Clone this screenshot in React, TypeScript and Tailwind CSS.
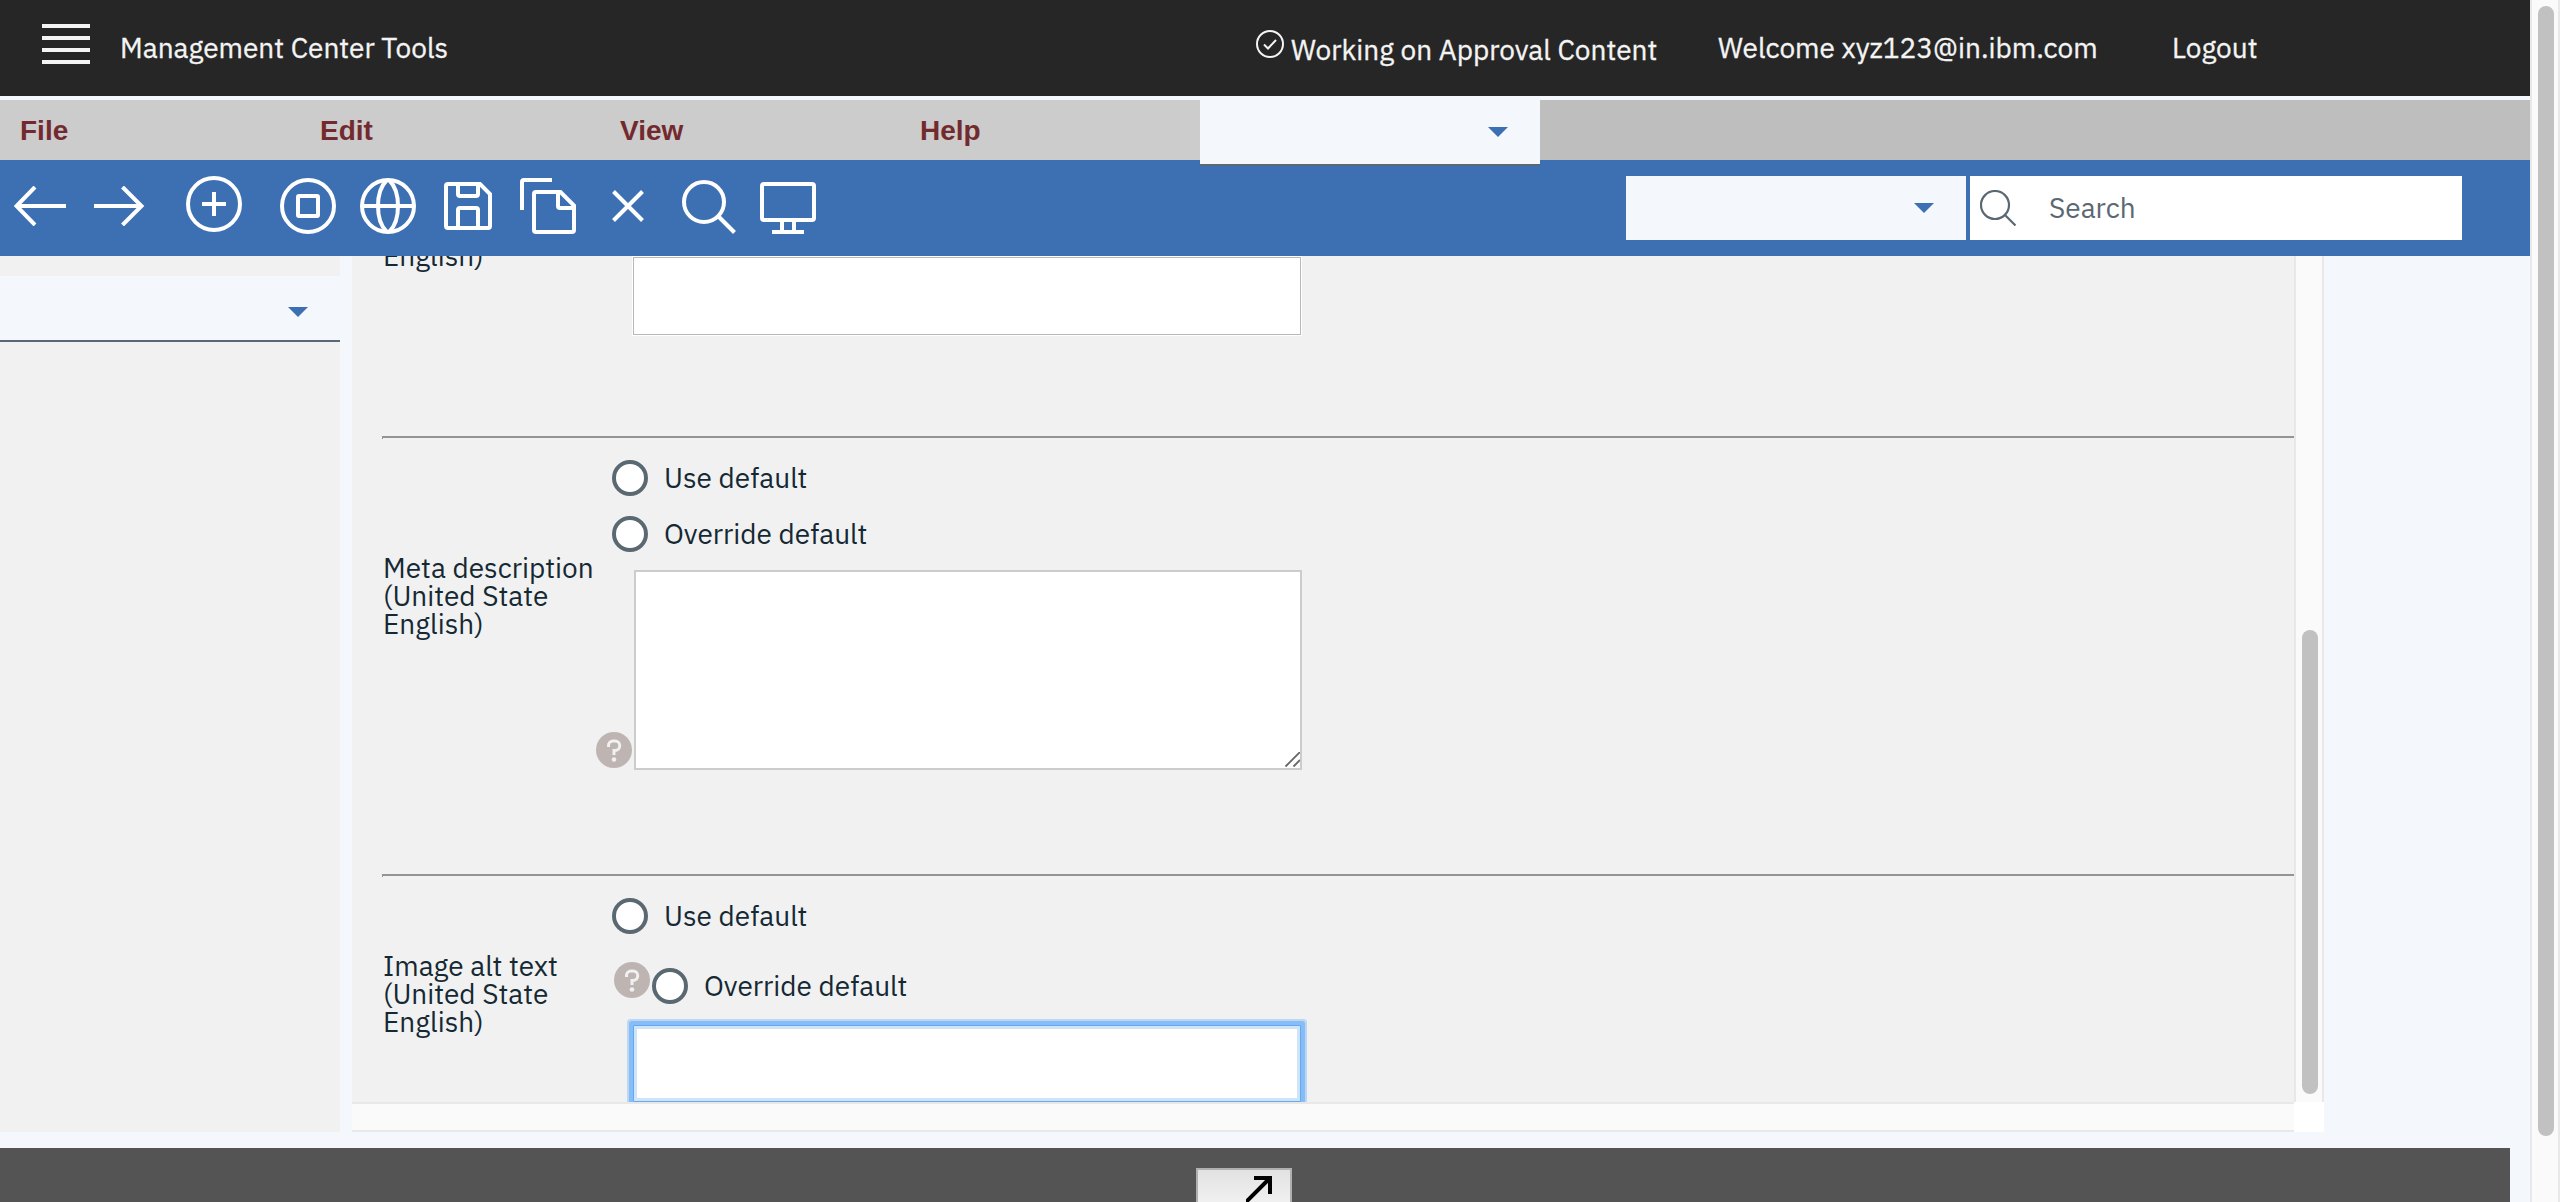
import type { ReactNode } from "react";

const plex = "font-['IBM_Plex_Sans','Inter',sans-serif]";

function Icon({ w, h, className = "", children }: { w: number; h: number; className?: string; children: ReactNode }) {
  return (
    <svg width={w} height={h} viewBox={`0 0 ${w} ${h}`} fill="none" stroke="currentColor" strokeWidth={4} className={`shrink-0 ${className}`}>
      {children}
    </svg>
  );
}

function Caret() {
  return (
    <svg width="20" height="10" viewBox="0 0 20 10" className="shrink-0 fill-[#3d70b2]">
      <path d="M0 0h20L10 10z" />
    </svg>
  );
}

function Radio({ label, className = "" }: { label: string; className?: string }) {
  return (
    <label className={`flex h-9 items-center ${className}`}>
      <span className="size-9 shrink-0 rounded-full border-4 border-[#5a6872] bg-white" />
      <span className="ml-4 whitespace-nowrap text-[28px] leading-9">{label}</span>
    </label>
  );
}

function Help({ className = "" }: { className?: string }) {
  return (
    <span className={`flex size-9 shrink-0 items-center justify-center rounded-full bg-[#beb4b2] ${className}`}>
      <svg width="36" height="36" viewBox="0 0 36 36" fill="none" stroke="#f1f1f1" strokeWidth="3">
        <path d="M12.500 15v-1.500a4.500 4.500 0 0 1 4.500-4.500h2a4.500 4.500 0 0 1 0 9.500h-1v4.500" />
        <circle cx="18" cy="27.500" r="2.300" fill="#f1f1f1" stroke="none" />
      </svg>
    </span>
  );
}

function FieldLabel({ lines, className = "" }: { lines: string[]; className?: string }) {
  return (
    <div className={`w-[214px] shrink-0 pl-px text-[28px] leading-7 ${className}`}>
      {lines.map((l) => (
        <div key={l} className="whitespace-nowrap">{l}</div>
      ))}
    </div>
  );
}

function Divider() {
  return <hr className="h-[3px] shrink-0 border-0 border-l border-t-2 border-[#949494]" />;
}

function Header() {
  return (
    <header className="flex h-24 shrink-0 items-start bg-[#262626] text-[28px] leading-8 text-[#f4f4f4] [-webkit-text-stroke:0.3px_#f4f4f4]">
      <div className="ml-[42px] mt-6 flex w-12 flex-col gap-2">
        <i className="h-1 bg-[#f4f4f4]" />
        <i className="h-1 bg-[#f4f4f4]" />
        <i className="h-1 bg-[#f4f4f4]" />
        <i className="h-1 bg-[#f4f4f4]" />
      </div>
      <span className="ml-[30px] mt-8 w-[1136px] whitespace-nowrap">Management Center Tools</span>
      <Icon w={28} h={28} className="mt-[30px]">
        <circle cx="14" cy="14" r="13" strokeWidth="2" />
        <path d="M8 14.500l4 4 8-8.500" strokeWidth="2" />
      </Icon>
      <span className="ml-[7px] mt-[34px] w-[427px] whitespace-nowrap">Working on Approval Content</span>
      <span className="mt-8 w-[454px] whitespace-nowrap">Welcome xyz123@in.ibm.com</span>
      <span className="mt-8 whitespace-nowrap">Logout</span>
    </header>
  );
}

function MenuBar() {
  return (
    <nav className="mt-1 flex h-[60px] shrink-0 bg-[#bebebe] font-['Liberation_Sans'] text-[28px] font-bold leading-[62px] text-[#732a2e]">
      {["File", "Edit", "View", "Help"].map((m) => (
        <div key={m} className="w-[300px] bg-[#ccc] pl-5">{m}</div>
      ))}
      <div className="relative z-10 -mt-1 flex h-[70px] w-[340px] items-center justify-end border-b-2 border-[#5a6872] bg-[#f4f7fb] pr-8 pt-1">
        <Caret />
      </div>
    </nav>
  );
}

function Toolbar() {
  return (
    <div className="relative z-[5] flex h-24 shrink-0 items-start bg-[#3d70b2] text-white">
      <Icon w={52} h={40} className="ml-[14px] mt-[26px]">
        <path d="M52 20H3M21 1L2.500 20 21 39" />
      </Icon>
      <Icon w={52} h={40} className="ml-[28px] mt-[26px]">
        <path d="M0 20h47M28.500 1L47.500 20l-19 19" />
      </Icon>
      <Icon w={56} h={56} className="ml-10 mt-4">
        <circle cx="28" cy="28" r="26" />
        <path d="M28 16v24M16 28h24" />
      </Icon>
      <Icon w={56} h={56} className="ml-[38px] mt-[18px]">
        <circle cx="28" cy="28" r="26" />
        <rect x="18" y="18" width="20" height="20" rx="1" />
      </Icon>
      <Icon w={56} h={56} className="ml-6 mt-[18px]">
        <circle cx="28" cy="28" r="26" />
        <path d="M2 28h52M26.500 2.500C21 8 18 18 18 28s3 20 8.500 25.500M29.500 2.500C35 8 38 18 38 28s-3 20-8.500 25.500" />
      </Icon>
      <Icon w={48} h={48} className="ml-7 mt-[22px]">
        <path d="M4 2h32l10 10v32a2 2 0 0 1-2 2H4a2 2 0 0 1-2-2V4a2 2 0 0 1 2-2z" />
        <path d="M14 2v10a2 2 0 0 0 2 2h16a2 2 0 0 0 2-2V2M14 46V28a2 2 0 0 1 2-2h16a2 2 0 0 1 2 2v18" />
      </Icon>
      <Icon w={56} h={56} className="ml-7 mt-[18px]">
        <path d="M2 32V4a2 2 0 0 1 2-2h28" />
        <path d="M16 14h24.500L54 27.500V52a2 2 0 0 1-2 2H16a2 2 0 0 1-2-2V16a2 2 0 0 1 2-2z" />
        <path d="M38 14v14a2 2 0 0 0 2 2h14" />
      </Icon>
      <Icon w={32} h={32} className="ml-9 mt-[30px]">
        <path d="M1.500 1.500l29 29M30.500 1.500l-29 29" />
      </Icon>
      <Icon w={54} h={54} className="ml-[38px] mt-5">
        <circle cx="22" cy="22" r="20" />
        <path d="M36.500 36.500l16 16" />
      </Icon>
      <Icon w={56} h={52} className="ml-6 mt-[22px]">
        <rect x="2" y="2" width="52" height="36" rx="2" />
        <path d="M22 38v12M34 38v12M12 50h32" />
      </Icon>
      <div className="ml-[810px] mt-4 flex h-16 w-[340px] items-center justify-end bg-[#f4f7fb] pr-8">
        <Caret />
      </div>
      <div className="ml-1 mt-4 flex h-16 w-[492px] items-center bg-white pl-[10px] text-[#5a6872]">
        <Icon w={36} h={36}>
          <circle cx="15" cy="15" r="14" strokeWidth="2.200" />
          <path d="M25 25l10.500 10.500" strokeWidth="2.200" />
        </Icon>
        <span className="ml-[33px] text-[28px]">Search</span>
      </div>
    </div>
  );
}

function Form() {
  return (
    <div className="flex h-[846px] flex-col overflow-hidden bg-[#f1f1f1] pl-[30px] text-[#152934]">
      <div className="flex h-[180px] shrink-0 items-start">
        <FieldLabel className="-mt-[14px]" lines={["English)"]} />
        <div className="ml-[37px] mt-px h-[78px] w-[668px] border border-[#b8b8b8] bg-white outline-1 outline-white" />
      </div>
      <Divider />
      <div className="flex h-[435px] shrink-0 items-start">
        <FieldLabel className="mt-[115px]" lines={["Meta description", "(United State", "English)"]} />
        <Help className="mt-[293px]" />
        <div className="-ml-5 mt-[21px] flex flex-col">
          <Radio label="Use default" />
          <Radio label="Override default" className="mt-5" />
          <div className="relative ml-[22px] mt-[18px] h-[200px] w-[668px] border-2 border-[#ccc] bg-white">
            <svg width="16" height="16" viewBox="0 0 16 16" className="absolute bottom-0 right-0" stroke="#666" strokeWidth="1.800">
              <path d="M1.500 14.500L16 0M9.500 14.500l6.500-6.500" />
            </svg>
          </div>
        </div>
      </div>
      <Divider />
      <div className="flex shrink-0 items-start">
        <FieldLabel className="mt-[75px]" lines={["Image alt text", "(United State", "English)"]} />
        <div className="ml-4 mt-[21px] flex flex-col">
          <Radio label="Use default" />
          <div className="ml-0.5 mt-7 flex items-start">
            <Help />
            <Radio label="Override default" className="ml-0.5 mt-1.5" />
          </div>
          <div className="ml-[21px] mt-[21px] h-[77px] w-[668px] rounded-[1px] border border-[#69a8ee] bg-white shadow-[0_0_0_4px_#85bdf8,0_0_0_6px_#bdd7f2,inset_0_0_0_3px_#cde4fb]" />
        </div>
      </div>
    </div>
  );
}

export default function App() {
  return (
    <div className={`flex h-[1202px] w-[2560px] overflow-hidden bg-[#f4f7fb] ${plex}`}>
      <div className="flex w-[2530px] shrink-0 flex-col">
        <Header />
        <MenuBar />
        <Toolbar />
        <main className="flex h-[892px] shrink-0">
          <aside className="h-[876px] w-[340px] shrink-0 bg-[#f1f1f1] pt-5">
            <div className="flex h-[66px] items-center justify-end border-b-2 border-[#5a6872] bg-[#f4f7fb] pr-8 pt-2">
              <Caret />
            </div>
          </aside>
          <section className="ml-3 w-[1942px] shrink-0">
            <Form />
            <div className="h-[30px] border-y-2 border-[#e8e8e8] bg-[#fafafa]" />
          </section>
          <div className="w-[30px] shrink-0">
            <div className="h-[846px] border-x-2 border-[#e8e8e8] bg-[#fafafa] pl-1.5 pt-[374px]">
              <div className="h-[464px] w-4 rounded-full bg-[#c1c1c1]" />
            </div>
            <div className="h-[30px] bg-white" />
          </div>
        </main>
        <footer className="h-[54px] w-[2510px] shrink-0 bg-[#545454] pl-[1196px] pt-5">
          <div className="h-[34px] w-24 border-2 border-b-0 border-[#b0b0b0] bg-linear-to-b from-[#e2e2e2] to-[#f0f0f0] pl-12 pt-1.5 text-black">
            <Icon w={26} h={26}>
              <path d="M8 2h16v16M0 26L23 3" />
            </Icon>
          </div>
        </footer>
      </div>
      <div className="w-[30px] shrink-0 border-x-2 border-[#e8e8e8] bg-[#fafafa] pl-1.5 pt-1.5">
        <div className="h-[1130px] w-4 rounded-full bg-[#c1c1c1]" />
      </div>
    </div>
  );
}
